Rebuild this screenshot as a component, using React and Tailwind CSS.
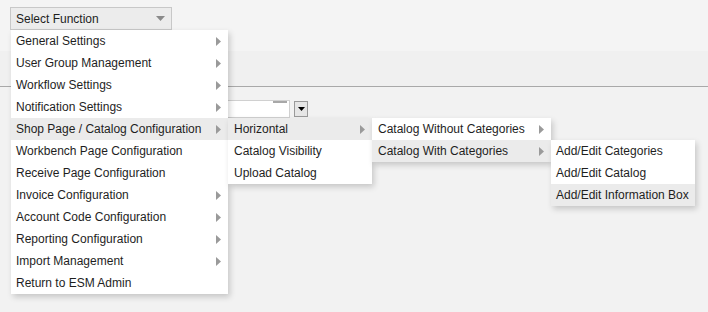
import React from 'react';

const MAIN = [
  { label: 'General Settings', sub: true },
  { label: 'User Group Management', sub: true },
  { label: 'Workflow Settings', sub: true },
  { label: 'Notification Settings', sub: true },
  { label: 'Shop Page / Catalog Configuration', sub: true, open: true },
  { label: 'Workbench Page Configuration' },
  { label: 'Receive Page Configuration' },
  { label: 'Invoice Configuration', sub: true },
  { label: 'Account Code Configuration', sub: true },
  { label: 'Reporting Configuration', sub: true },
  { label: 'Import Management', sub: true },
  { label: 'Return to ESM Admin' },
];

const SHOP = [
  { label: 'Horizontal', sub: true, open: true },
  { label: 'Catalog Visibility' },
  { label: 'Upload Catalog' },
];

const HORIZ = [
  { label: 'Catalog Without Categories', sub: true },
  { label: 'Catalog With Categories', sub: true, open: true },
];

const WITHCAT = [
  { label: 'Add/Edit Categories' },
  { label: 'Add/Edit Catalog' },
  { label: 'Add/Edit Information Box', open: true },
];

const Caret = () => (
  <svg width="5" height="9" viewBox="0 0 5 9" className="shrink-0">
    <path d="M0 0 L5 4.5 L0 9 Z" fill="#9a9a9a" />
  </svg>
);

function Row({ item, pl, pr, children }) {
  return (
    <div className={`relative h-[22px] flex items-center justify-between whitespace-nowrap ${item.open ? 'bg-[#ebebeb]' : ''}`}
      style={{ paddingLeft: pl, paddingRight: pr }}>
      <span>{item.label}</span>
      {item.sub && <Caret />}
      {children}
    </div>
  );
}

const shadow = 'shadow-[2px_3px_6px_rgba(0,0,0,0.18)]';

export default function App() {
  return (
    <div className="relative w-[708px] h-[312px] overflow-hidden bg-[#f2f2f2] text-[12px] text-[#1e1e1e]"
      style={{ fontFamily: '"Liberation Sans", Arial, sans-serif' }}>
      {/* page bands */}
      <div className="h-[51px] bg-[#f4f4f4] pt-[7px] pl-[10px]">
        <div className="w-[162px] h-[23px] border border-[#c8c8c8] bg-[#ececec] flex items-center justify-between pl-[5px] pr-[6px]">
          <span>Select Function</span>
          <svg width="9" height="5" viewBox="0 0 9 5"><path d="M0 0 L9 0 L4.5 5 Z" fill="#8a8a8a" /></svg>
        </div>
      </div>
      <div className="h-[36px] bg-[#f0f0f0] border-b border-[#a9a9a9]" />
      <div className="pt-[13px] pl-[180px] flex items-start gap-[4px]">
        <div className="relative w-[110px] h-[18px] bg-white border border-[#d0d0d0]">
          <div className="absolute right-[2px] top-0 w-[14px] h-[2px] bg-[#a8a8a8]" />
        </div>
        <div className="w-[14px] h-[16px] mt-[1px] border border-[#9a9a9a] bg-[#e6e6e6] flex items-center justify-center">
          <svg width="7" height="4" viewBox="0 0 7 4"><path d="M0 0 L7 0 L3.5 4 Z" fill="#000" /></svg>
        </div>
      </div>

      {/* cascading menu */}
      <div className={`absolute left-[11px] top-[30px] w-[217px] bg-white ${shadow}`}>
        {MAIN.map((m) => (
          <Row key={m.label} item={m} pl={5} pr={7}>
            {m.open && (
              <div className={`absolute left-full top-0 w-[144px] bg-white ${shadow}`}>
                {SHOP.map((s) => (
                  <Row key={s.label} item={s} pl={6} pr={7}>
                    {s.open && (
                      <div className={`absolute left-full top-0 w-[179px] bg-white ${shadow}`}>
                        {HORIZ.map((h) => (
                          <Row key={h.label} item={h} pl={6} pr={7}>
                            {h.open && (
                              <div className={`absolute left-full top-0 w-[144px] bg-white ${shadow}`}>
                                {WITHCAT.map((w) => (
                                  <Row key={w.label} item={w} pl={5} pr={7} />
                                ))}
                              </div>
                            )}
                          </Row>
                        ))}
                      </div>
                    )}
                  </Row>
                ))}
              </div>
            )}
          </Row>
        ))}
      </div>
    </div>
  );
}
